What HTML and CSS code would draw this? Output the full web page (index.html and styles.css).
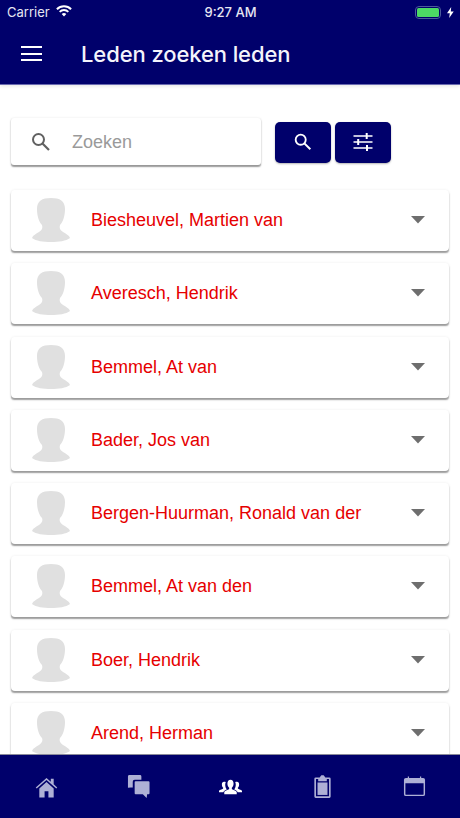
FILE: index.html
```html
<!DOCTYPE html>
<html lang="nl">
<head>
<meta charset="utf-8">
<title>Leden zoeken leden</title>
<link rel="stylesheet" href="styles.css">
</head>
<body>
<svg class="defs" width="0" height="0" aria-hidden="true">
  <symbol id="person" viewBox="0 0 38 44">
    <path d="M19 0C10 0 5 3 5 11c0 7 2 13 5 16 1 3 0 5-3 7-3 2-6 3-7 6 4 3 11 4 19 4s15-1 19-4c-1-3-4-4-7-6-3-2-4-4-3-7 3-3 5-9 5-16C33 3 28 0 19 0z"/>
  </symbol>
  <symbol id="caret" viewBox="0 0 14 8">
    <path d="M0 0h14L7 7.500z"/>
  </symbol>
  <symbol id="magnifier" viewBox="0 0 24 24">
    <circle cx="9.500" cy="9.500" r="5.500" fill="none" stroke="currentColor" stroke-width="2"/>
    <path d="M13.500 13.500 20 20" fill="none" stroke="currentColor" stroke-width="2.200"/>
  </symbol>
</svg>
<div class="app">
  <header class="topbar">
    <div class="status">
      <div class="status-left">
        <span>Carrier</span>
        <svg class="wifi" viewBox="0 0 16 12"><path d="M8 11.500 5.700 9a3.300 3.300 0 0 1 4.600 0zM4.300 7.600 3 6.200a7 7 0 0 1 10 0l-1.300 1.400a5.200 5.200 0 0 0-7.400 0zM1.600 4.900 .2 3.400a11 11 0 0 1 15.600 0l-1.400 1.500a9 9 0 0 0-12.800 0z"/></svg>
      </div>
      <span class="status-time">9:27 AM</span>
      <div class="status-right">
        <span class="battery"><span class="battery-fill"></span></span>
        <svg class="bolt" viewBox="0 0 7 11"><path d="M4.200 0 0 6.200h2.800L2.200 11l4.500-6.600H3.800z"/></svg>
      </div>
    </div>
    <div class="titlebar">
      <button class="menu" aria-label="Menu"><span></span><span></span><span></span></button>
      <h1>Leden zoeken leden</h1>
    </div>
  </header>

  <main class="content">
    <div class="searchrow">
      <label class="searchbox">
        <svg class="search-icon"><use href="#magnifier"/></svg>
        <span class="placeholder">Zoeken</span>
      </label>
      <div class="actions">
        <button class="action" aria-label="Zoeken"><svg><use href="#magnifier"/></svg></button>
        <button class="action" aria-label="Filter"><svg class="sliders" viewBox="0 0 24 24"><path d="M2.500 5.200h19v1.500h-19zM2.500 11.200h19v1.500h-19zM2.500 17.200h19v1.500h-19zM14.700 3h2v6h-2zM6.200 9h2v6h-2zM15 15h2v6h-2z"/></svg></button>
      </div>
    </div>

    <ul class="list">
      <li class="card"><svg class="avatar"><use href="#person"/></svg><span class="name">Biesheuvel, Martien van</span><svg class="caret"><use href="#caret"/></svg></li>
      <li class="card"><svg class="avatar"><use href="#person"/></svg><span class="name">Averesch, Hendrik</span><svg class="caret"><use href="#caret"/></svg></li>
      <li class="card"><svg class="avatar"><use href="#person"/></svg><span class="name">Bemmel, At van</span><svg class="caret"><use href="#caret"/></svg></li>
      <li class="card"><svg class="avatar"><use href="#person"/></svg><span class="name">Bader, Jos van</span><svg class="caret"><use href="#caret"/></svg></li>
      <li class="card"><svg class="avatar"><use href="#person"/></svg><span class="name">Bergen-Huurman, Ronald van der</span><svg class="caret"><use href="#caret"/></svg></li>
      <li class="card"><svg class="avatar"><use href="#person"/></svg><span class="name">Bemmel, At van den</span><svg class="caret"><use href="#caret"/></svg></li>
      <li class="card"><svg class="avatar"><use href="#person"/></svg><span class="name">Boer, Hendrik</span><svg class="caret"><use href="#caret"/></svg></li>
      <li class="card"><svg class="avatar"><use href="#person"/></svg><span class="name">Arend, Herman</span><svg class="caret"><use href="#caret"/></svg></li>
    </ul>
  </main>

  <nav class="tabbar">
    <svg class="tab" viewBox="0 0 24 24"><path d="M12 3 .8 13l1 1.200L12 5.200l10.200 9 1-1.200L19.500 9.700V4h-3v3zM4.500 14v9.500h5.500v-6.500h4v6.500h5.500V14L12 7.300z"/></svg>
    <svg class="tab" viewBox="0 0 24 24"><path d="M1 1.500A1.500 1.500 0 0 1 2.500 0h11A1.500 1.500 0 0 1 15 1.500V5H8a2 2 0 0 0-2 2v6H4l-3 .2z"/><path d="M8 7.500A1 1 0 0 1 9 6.500h13.500a1 1 0 0 1 1 1V19a1 1 0 0 1-1 1H21l-.5 4-4-4H9a1 1 0 0 1-1-1z"/></svg>
    <svg class="tab tab-active" viewBox="0 0 24 24"><path d="M12 5c2 0 3.200 1.500 3.200 3.800 0 2-.8 3.700-1.800 4.500v1.200c0 .7 4.600 1.500 5.100 3.300V20h-13v-2.200c.5-1.800 5.100-2.600 5.100-3.300v-1.200c-1-.8-1.800-2.500-1.800-4.500C8.800 6.500 10 5 12 5z"/><path d="M5.200 7C3.800 7 3 8.200 3 9.800c0 1.500.6 2.700 1.300 3.300v.9C4 14.600 1 15 0 16.500V18h4.500c.3-1.500 1.800-2.300 3.600-3l-.6-.8c-.6-1-1-2.500-1-4 0-1.200.2-2.200.6-3C6.500 7.100 5.900 7 5.200 7z"/><path d="M18.800 7c1.400 0 2.200 1.200 2.200 2.800 0 1.500-.6 2.700-1.300 3.300v.9c.3.6 3.300 1 4.300 2.500V18h-4.500c-.3-1.500-1.800-2.300-3.600-3l.6-.8c.6-1 1-2.500 1-4 0-1.200-.2-2.200-.6-3 .6-.1 1.200-.2 1.900-.2z"/></svg>
    <svg class="tab" viewBox="0 0 24 24"><path fill-rule="evenodd" d="M5 2.500h4l1.800-2.300h2.400L15 2.500h4a1.500 1.500 0 0 1 1.500 1.500v18.500A1.500 1.500 0 0 1 19 24H5a1.500 1.500 0 0 1-1.500-1.500V4A1.500 1.500 0 0 1 5 2.500zM5.200 4.200v18h13.600v-18H16.500v2.300h-9V4.200z"/><path d="M6.800 7.800h10.400v13H6.800z"/></svg>
    <svg class="tab" viewBox="0 0 24 24"><path fill-rule="evenodd" d="M3 3h2V1.500h1.300V3h11.400V1.500H19V3h2a2 2 0 0 1 2 2v15a2 2 0 0 1-2 2H3a2 2 0 0 1-2-2V5a2 2 0 0 1 2-2zM2.500 8.500V20c0 .3.200.5.500.5h18c.3 0 .5-.2.500-.5V8.500z"/></svg>
  </nav>
</div>
</body>
</html>
```
FILE: styles.css
```css
* { box-sizing: border-box; }
html, body { margin: 0; padding: 0; height: 100%; }
body { font-family: "Liberation Sans", "Roboto", sans-serif; background: #fff; overflow: hidden; }
.defs { display: block; height: 0; }
button { border: 0; padding: 0; background: none; font: inherit; }

.app { display: flex; flex-direction: column; width: 460px; height: 818px; overflow: hidden; }

.topbar { flex: none; height: 85px; background: #00006b; color: #fff; border-bottom: 1px solid #6a6ab0; box-shadow: 0 1px 4px rgba(0,0,0,.12); z-index: 2; }
.status { display: grid; grid-template-columns: 1fr auto 1fr; align-items: center; height: 24px; padding: 0 6px 0 7px; font-family: "Inter", "Liberation Sans", sans-serif; font-size: 13px; color: #e6e6f2; }
.status-left { display: flex; align-items: center; gap: 6px; }
.wifi { width: 16px; height: 12px; fill: #fff; margin-top: -2px; }
.status-time { font-weight: 500; }
.status-right { display: flex; justify-content: flex-end; align-items: center; gap: 6px; }
.battery { width: 26px; height: 13px; border: 1.500px solid #4a5a9a; border-radius: 4px; padding: 1px; display: block; }
.battery-fill { display: block; height: 100%; background: #4cd964; border-radius: 1.500px; }
.bolt { width: 7px; height: 11px; fill: #fff; }

.titlebar { display: flex; align-items: center; height: 60px; padding: 0 0 0 21px; }
.menu { display: flex; flex-direction: column; justify-content: center; gap: 4.500px; width: 21px; margin-top: -1px; }
.menu span { display: block; height: 2px; background: #fff; }
h1 { margin: -1px 0 0 39px; font-size: 22px; font-weight: 500; font-family: "Inter", "Liberation Sans", sans-serif; letter-spacing: -.1px; color: #f4f4fb; }

.content { flex: 1; min-height: 0; overflow: hidden; padding: 33px 11px 0; }
.searchrow { display: flex; align-items: center; height: 47px; }
.searchbox { display: flex; align-items: center; width: 250px; height: 47px; background: #fff; border-radius: 3px; box-shadow: 0 1.500px 1.500px rgba(0,0,0,.4), 0 0 3px rgba(0,0,0,.06); padding: 1px 0 0 18px; }
.search-icon { width: 24px; height: 24px; color: #616161; flex: none; margin-top: -1px; }
.placeholder { margin: 1px 0 0 19px; font-size: 18px; color: #9a9a9a; }
.actions { display: flex; gap: 4px; margin: 1px 0 0 14px; }
.action { display: flex; align-items: center; justify-content: center; width: 56px; height: 41px; background: #00006b; border-radius: 5px; box-shadow: 0 1px 2px rgba(0,0,0,.3); color: #fff; }
.action svg { width: 22px; height: 22px; fill: #fff; }
.action .sliders { width: 24px; height: 24px; }

.list { list-style: none; margin: 25px 0 0; padding: 0; display: flex; flex-direction: column; gap: 12.300px; }
.card { flex: none; display: flex; align-items: center; height: 61px; width: 438px; background: #fff; border-radius: 4px; box-shadow: 0 2px 1.500px -.5px rgba(0,0,0,.38), 0 0 3px rgba(0,0,0,.07); padding: 0 24px 0 21px; }
.avatar { width: 38px; height: 44px; fill: #e0e0e0; flex: none; margin-top: -1px; }
.name { flex: 1; margin-left: 21px; font-size: 18px; color: #e60000; white-space: nowrap; }
.caret { width: 14px; height: 8px; fill: #6e6e6e; flex: none; margin-top: -1px; }

.tabbar { flex: none; height: 64px; background: #00006b; border-top: 1px solid #8a8a9a; display: grid; grid-template-columns: repeat(5, 1fr); justify-items: center; align-items: center; z-index: 2; }
.tab { width: 23px; height: 23px; fill: #aeb0d6; margin-top: -1px; }
.tab-active { fill: #fff; }
```
